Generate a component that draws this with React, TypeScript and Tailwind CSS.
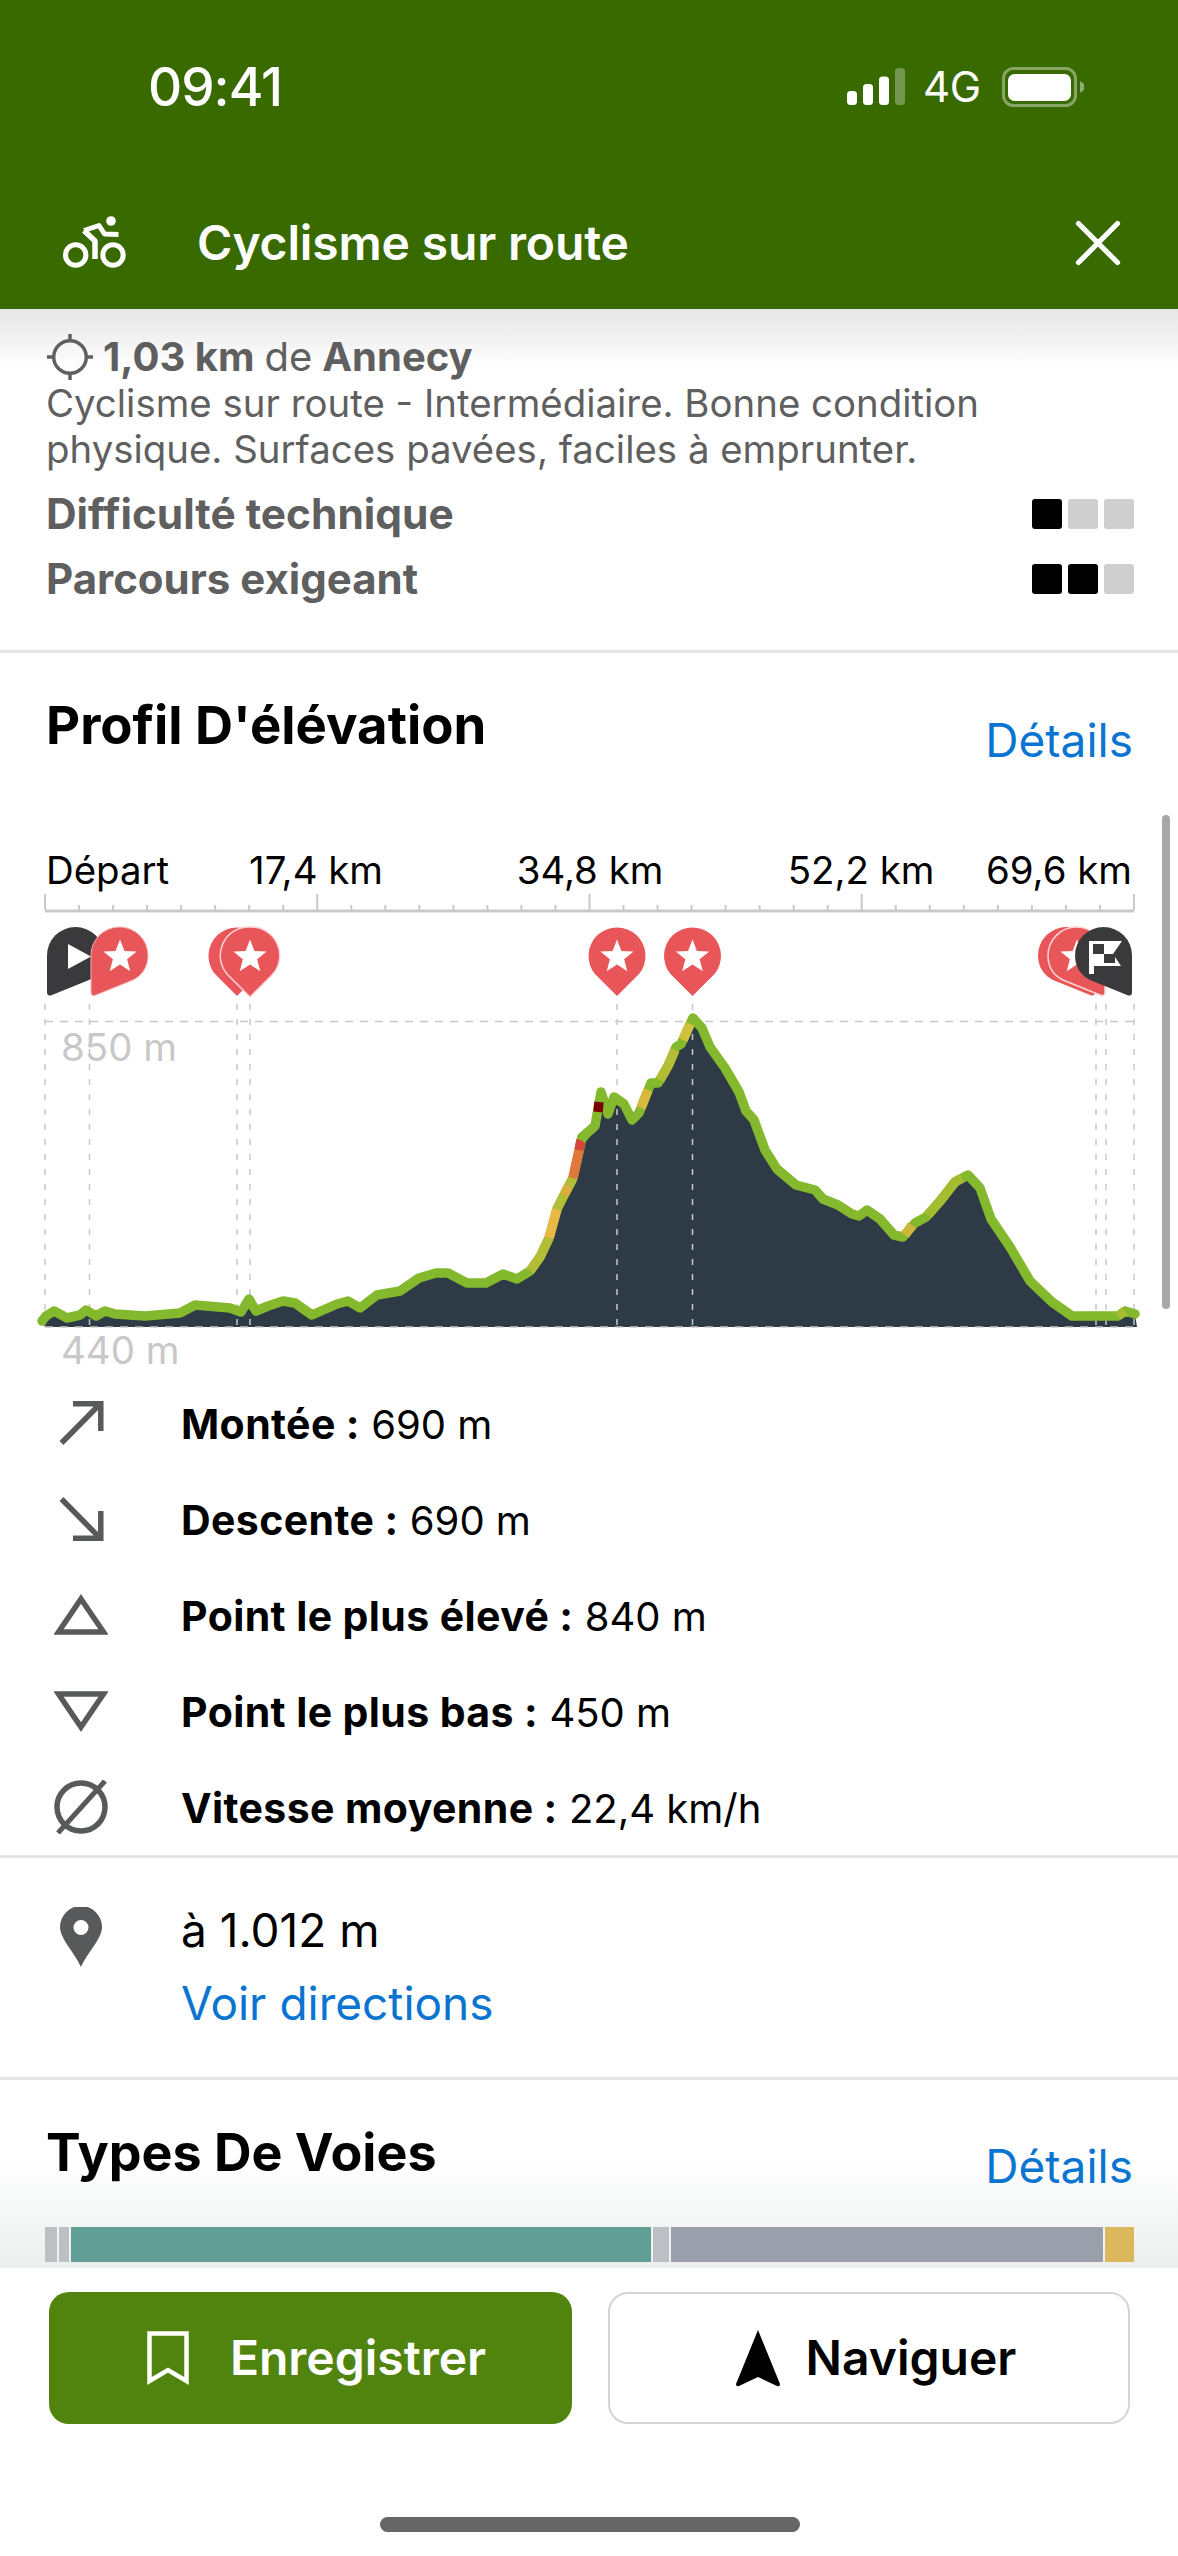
import React from 'react';
import { X } from 'lucide-react';

const font = 'font-["Inter","Liberation_Sans",sans-serif]';

// elevation curve, in page pixels
const curve: [number, number][] = [
  [42, 1321], [46, 1316], [54, 1311], [67, 1318], [80, 1315], [86, 1310], [96, 1316], [105, 1311], [115, 1314],
  [145, 1316], [180, 1313], [195, 1305], [230, 1308], [241, 1312], [249, 1299], [256, 1311], [268, 1306], [283, 1301],
  [295, 1303], [312, 1315], [337, 1304], [348, 1301], [360, 1308], [377, 1295], [400, 1291], [419, 1278], [436, 1273],
  [448, 1273], [467, 1283], [486, 1283], [503, 1274], [517, 1279], [530, 1271], [540, 1257], [549, 1238], [557, 1209],
  [564, 1195], [573, 1178], [580, 1147], [582, 1137], [587, 1133], [595, 1126], [601, 1092], [608, 1114], [614, 1097],
  [624, 1104], [632, 1120], [639, 1113], [651, 1083], [658, 1083], [668, 1066], [676, 1047], [681, 1044], [693, 1018],
  [702, 1028], [710, 1047], [725, 1068], [739, 1092], [746, 1111], [754, 1120], [765, 1150], [777, 1169], [796, 1185],
  [815, 1190], [823, 1199], [838, 1205], [852, 1214], [859, 1216], [867, 1210], [880, 1219], [894, 1235], [903, 1237],
  [915, 1223], [926, 1217], [941, 1200], [955, 1182], [968, 1175], [980, 1188], [991, 1219], [1010, 1247], [1030, 1281],
  [1052, 1302], [1072, 1316], [1095, 1316], [1118, 1316], [1125, 1311], [1135, 1314],
];

const grade: { color: string; pts: [number, number][] }[] = [
  { color: '#b4bd36', pts: [[530, 1271], [540, 1257], [549, 1238]] },
  { color: '#e8b944', pts: [[549, 1238], [557, 1209]] },
  { color: '#b4bd36', pts: [[557, 1209], [564, 1195]] },
  { color: '#dcae3e', pts: [[564, 1195], [569, 1186]] },
  { color: '#b4bd36', pts: [[569, 1186], [573, 1178]] },
  { color: '#e0783c', pts: [[573, 1178], [579, 1150]] },
  { color: '#d8453c', pts: [[579, 1150], [581, 1140]] },
  { color: '#84b82d', pts: [[581, 1140], [587, 1133], [595, 1126]] },
  { color: '#7a0000', pts: [[598, 1112], [599, 1102]] },
  { color: '#d8b93c', pts: [[641, 1108], [648, 1090]] },
  { color: '#b4bd36', pts: [[660, 1080], [668, 1066], [675, 1050]] },
  { color: '#cfc13c', pts: [[683, 1040], [690, 1024]] },
  { color: '#cfb63c', pts: [[905, 1235], [912, 1225]] },
  { color: '#a4bc30', pts: [[928, 1215], [941, 1200], [955, 1182], [962, 1178]] },
  { color: '#a4bc30', pts: [[1118, 1316], [1125, 1311]] },
];

const toPts = (pts: [number, number][]) => pts.map(p => p.join(',')).join(' ');

const ticks = Array.from({ length: 33 }, (_, i) => 45 + i * 34.03);
const markers = [45, 89.5, 237, 250, 617, 692.5, 1096, 1106, 1134];

const Star = ({ cx, cy }: { cx: number; cy: number }) => {
  const pts = Array.from({ length: 10 }, (_, i) => {
    const r = i % 2 === 0 ? 17.5 : 7.5;
    const a = (Math.PI / 5) * i - Math.PI / 2;
    return `${cx + r * Math.cos(a)},${cy + r * Math.sin(a)}`;
  }).join(' ');
  return <polygon points={pts} fill="#fff" />;
};

const RoundPin = ({ cx }: { cx: number }) => (
  <path d={`M${cx} 996 L${cx - 22} 974 A28.5 28.5 0 1 1 ${cx + 22} 974 Z`} fill="#e8565a" />
);

// pin whose point sits at the bottom left corner
const leftPin = (x: number) =>
  `M${x} 955.5 A28.5 28.5 0 0 1 ${x + 57} 955.5 C${x + 57} 968 ${x + 50} 976 ${x + 42} 980 L${x + 5} 995 Q${x} 997 ${x} 992 Z`;
// same pin, point at the bottom right corner
const rightPin = (x: number) =>
  `M${x + 57} 955.5 A28.5 28.5 0 0 0 ${x} 955.5 C${x} 968 ${x + 7} 976 ${x + 15} 980 L${x + 52} 995 Q${x + 57} 997 ${x + 57} 992 Z`;

const ElevationChart = () => (
  <svg viewBox="0 760 1178 615" className="block w-[1178px] h-[615px]">
    {/* axis */}
    <rect x="45" y="909.5" width="1089" height="3" fill="#c9c9c9" />
    {ticks.map((x, i) => (
      <rect key={i} x={x - 1} y={i % 8 === 0 ? 894 : 905} width="2" height={i % 8 === 0 ? 16 : 5} fill="#c9c9c9" />
    ))}

    {/* area */}
    <polygon points={`45,1327 ${toPts(curve)} 1137,1327`} fill="#2e3a46" />

    {/* grid */}
    <line x1="45" x2="1134" y1="1021.5" y2="1021.5" stroke="#c8c8c8" strokeWidth="1.5" strokeDasharray="8 7" />
    <line x1="45" x2="1134" y1="1327" y2="1327" stroke="#c8c8c8" strokeWidth="1.5" strokeDasharray="8 7" />
    {markers.map(x => (
      <line key={x} x1={x} x2={x} y1="1004" y2="1327" stroke="#c8c8c8" strokeWidth="1.5" strokeDasharray="6 9" />
    ))}

    {/* curve */}
    <polyline points={toPts(curve)} fill="none" stroke="#84b82d" strokeWidth="9.5" strokeLinejoin="round" strokeLinecap="round" />
    {grade.map((g, i) => (
      <polyline key={i} points={toPts(g.pts)} fill="none" stroke={g.color} strokeWidth="9.5" strokeLinejoin="round" />
    ))}

    {/* start */}
    <path d={leftPin(47)} fill="#3a3a3c" />
    <polygon points="68,944 91,956.5 68,969" fill="#fff" />
    <path d={leftPin(91)} fill="#e8565a" stroke="#f3b3b3" strokeWidth="1" />
    <Star cx={120} cy={957} />

    {/* waypoints */}
    <RoundPin cx={237} />
    <path d="M250 997 L228 975 A28.5 28.5 0 0 1 250 927 A28.5 28.5 0 0 1 272 975 Z" fill="#e8565a" stroke="#fbd5d5" strokeWidth="1.5" />
    <Star cx={250} cy={957} />
    <RoundPin cx={617} />
    <Star cx={617} cy={957} />
    <RoundPin cx={692.5} />
    <Star cx={692.5} cy={957} />

    {/* finish */}
    <path d={rightPin(1038)} fill="#e8565a" />
    <path d={rightPin(1048)} fill="#e8565a" stroke="#fbd5d5" strokeWidth="1.5" />
    <Star cx={1077} cy={957} />
    <path d={rightPin(1075)} fill="#3a3a3c" />
    <path d="M1089 941 H1122 L1113 954 L1121 966 H1094 V974 H1089 Z" fill="#fff" />
    <rect x="1093" y="944" width="11" height="10" fill="#3a3a3c" />
    <rect x="1104" y="954" width="11" height="9" fill="#3a3a3c" />
  </svg>
);

const AxisLabel = ({ className, children }: { className: string; children: React.ReactNode }) => (
  <span className={`absolute top-[87px] text-[38.4px] leading-[46px] text-black whitespace-nowrap ${className}`}>{children}</span>
);

const statIcons = [
  <svg key="up" viewBox="0 0 54 44" className="w-[54px] h-[44px]"><path d="M7.5 42 L46 3 M19 2.8 H46.8 V30" fill="none" stroke="#58595b" strokeWidth="5.5" /></svg>,
  <svg key="down" viewBox="0 0 54 44" className="w-[54px] h-[44px]"><path d="M7.5 2 L46 41 M19 41.2 H46.8 V14" fill="none" stroke="#58595b" strokeWidth="5.5" /></svg>,
  <svg key="high" viewBox="0 0 54 44" className="w-[54px] h-[44px]"><path d="M27 6 L49.5 39 H4.5 Z" fill="none" stroke="#58595b" strokeWidth="5.5" /></svg>,
  <svg key="low" viewBox="0 0 54 44" className="w-[54px] h-[44px]"><path d="M27 38 L49.5 5 H4.5 Z" fill="none" stroke="#58595b" strokeWidth="5.5" /></svg>,
  <svg key="avg" viewBox="0 0 54 54" className="w-[54px] h-[54px]"><circle cx="27" cy="27" r="24" fill="none" stroke="#58595b" strokeWidth="5.5" /><path d="M4 53 L51 1" stroke="#58595b" strokeWidth="5" /></svg>,
];

const stats = [
  { label: 'Montée :', value: '690 m' },
  { label: 'Descente :', value: '690 m' },
  { label: 'Point le plus élevé :', value: '840 m' },
  { label: 'Point le plus bas :', value: '450 m' },
  { label: 'Vitesse moyenne :', value: '22,4 km/h' },
];

const Rating = ({ filled }: { filled: number }) => (
  <div className="flex gap-[6px]">
    {[0, 1, 2].map(i => (
      <div key={i} className={`w-[30px] h-[30px] rounded-[3px] ${i < filled ? 'bg-black' : 'bg-[#cfcfcf]'}`} />
    ))}
  </div>
);

export default function App() {
  return (
    <div className={`${font} w-[1178px] h-[2556px] flex flex-col bg-white overflow-hidden`}>
      {/* Header */}
      <div className="h-[309px] shrink-0 bg-[#386a00] text-white flex flex-col">
        <div className="h-[176px] pt-[62px] pl-[148px] pr-[94px] flex items-start justify-between">
          <span className="text-[53px] leading-[50px] font-medium tracking-[-1px]">09:41</span>
          <div className="flex items-center h-[50px]">
            <svg viewBox="0 0 60 38" className="w-[60px] h-[38px]">
              <rect x="1" y="23" width="10" height="14" rx="3.5" fill="#fff" />
              <rect x="17" y="16" width="10" height="21" rx="3.5" fill="#fff" />
              <rect x="33" y="8.5" width="10" height="28.5" rx="3.5" fill="#fff" />
              <rect x="49" y="0" width="10" height="37" rx="3.5" fill="#fff" fillOpacity="0.3" />
            </svg>
            <span className="ml-[17px] w-[59px] text-[42px] leading-[50px] font-normal tracking-[-0.5px]">4G</span>
            <svg viewBox="0 0 82 40" className="ml-[20px] w-[82px] h-[40px]">
              <rect x="1.5" y="1.5" width="72" height="37" rx="10" fill="none" stroke="#fff" strokeOpacity="0.4" strokeWidth="3" />
              <rect x="6" y="7" width="63" height="27" rx="6.5" fill="#fff" />
              <path d="M78 14 L82 17 V23 L78 26 Z" fill="#fff" fillOpacity="0.45" />
            </svg>
          </div>
        </div>
        <div className="h-[133px] flex items-center relative">
          <svg viewBox="40 200 110 90" className="ml-[40px] w-[110px] h-[90px] mt-[2px]">
            <circle cx="111" cy="222" r="4.8" fill="#fff" />
            <circle cx="75.7" cy="256" r="10.2" fill="none" stroke="#fff" strokeWidth="5" />
            <circle cx="113" cy="256" r="10.2" fill="none" stroke="#fff" strokeWidth="5" />
            <path d="M84 231.5 L99 226.5 L104.5 235 L118.5 235.5" fill="none" stroke="#fff" strokeWidth="5" strokeLinejoin="round" />
            <path d="M84 231.5 L95 242 V260" fill="none" stroke="#fff" strokeWidth="5.5" strokeLinejoin="round" />
          </svg>
          <span className="ml-[47px] text-[48px] leading-[60px] font-semibold tracking-[-0.15px]">Cyclisme sur route</span>
          <X size={78} strokeWidth={1.6} className="ml-auto mr-[41px]" />
        </div>
      </div>

      {/* Scrolling content */}
      <div className="relative flex-1 min-h-0 overflow-hidden">
        <div className="absolute inset-x-0 top-0 h-[60px] bg-gradient-to-b from-[#e6e6e6] to-white" />

        <div className="relative h-[344px] border-b-[3px] border-[#e4e4e4] pl-[46px] pr-[44px] pt-[25px] text-[#5f5f5f]">
          <div className="flex items-center h-[46px] text-[40px] leading-[46px]">
            <svg viewBox="0 0 48 48" className="w-[46px] h-[46px] ml-[1px] mr-[10px]">
              <circle cx="24" cy="24" r="17" fill="none" stroke="#5f5f5f" strokeWidth="3.6" />
              <path d="M24 0 V8 M24 40 V48 M0 24 H8 M40 24 H48" stroke="#5f5f5f" strokeWidth="3.6" />
            </svg>
            <b className="font-bold">1,03 km</b>
            <span className="ml-[10px]">de</span>
            <b className="ml-[10px] font-bold">Annecy</b>
          </div>
          <p className="text-[38.4px] leading-[46px] whitespace-nowrap">
            Cyclisme sur route - Intermédiaire. Bonne condition
            <br />
            physique. Surfaces pavées, faciles à emprunter.
          </p>
          <div className="mt-[9px] h-[65px] flex items-center justify-between">
            <span className="text-[42.4px] font-bold">Difficulté technique</span>
            <Rating filled={1} />
          </div>
          <div className="h-[65px] flex items-center justify-between">
            <span className="text-[42px] font-bold">Parcours exigeant</span>
            <Rating filled={2} />
          </div>
        </div>

        {/* Elevation */}
        <div className="h-[107px] pl-[46px] pr-[45px] pt-[37px] flex items-start justify-between">
          <h2 className="text-[52.7px] leading-[70px] font-bold text-black">Profil D'élévation</h2>
          <a className="mt-[15px] text-[46px] leading-[70px] text-[#0a75d1]">Détails</a>
        </div>
        <div className="relative">
          <ElevationChart />
          <AxisLabel className="left-[46px]">Départ</AxisLabel>
          <AxisLabel className="left-[316px] -translate-x-1/2">17,4 km</AxisLabel>
          <AxisLabel className="left-[590px] -translate-x-1/2">34,8 km</AxisLabel>
          <AxisLabel className="left-[861px] -translate-x-1/2">52,2 km</AxisLabel>
          <AxisLabel className="right-[46px]">69,6 km</AxisLabel>
          <span className="absolute left-[61px] top-[264px] text-[38.5px] leading-[46px] text-[#c8c8c8]">850 m</span>
          <span className="absolute left-[61px] top-[567px] text-[38.5px] leading-[46px] text-[#c8c8c8]">440 m</span>
        </div>

        <div className="border-b-[3px] border-[#e4e4e4]">
          {stats.map((s, i) => (
            <div key={s.label} className="h-[96px] flex items-center">
              <div className="ml-[54px] w-[54px] flex justify-center">{statIcons[i]}</div>
              <div className="ml-[73px] mt-[4px] text-[40px] text-black whitespace-nowrap">
                <b className="font-bold text-[41px] tracking-[0.4px]">{s.label}</b> {s.value}
              </div>
            </div>
          ))}
        </div>

        <div className="h-[222px] box-border border-b-[3px] border-[#e4e4e4] pt-[36px] flex items-start">
          <svg viewBox="0 0 42 60" className="ml-[60px] mt-[13px] w-[42px] h-[60px]">
            <path
              d="M21 60 C15 46 0 32 0 20 A21 21 0 0 1 42 20 C42 32 27 46 21 60 Z M21 13 A7.5 7.5 0 1 0 21 28 A7.5 7.5 0 1 0 21 13 Z"
              fill="#58595b"
              fillRule="evenodd"
            />
          </svg>
          <div className="ml-[79px] text-[46px] leading-[73px]">
            <div className="text-black">à 1.012 m</div>
            <a className="block text-[#0a75d1]">Voir directions</a>
          </div>
        </div>

        <div className="absolute inset-x-0 bottom-0 h-[110px] bg-gradient-to-b from-transparent to-[#dfe4e2]/60 pointer-events-none" />

        {/* Road types */}
        <div className="relative pl-[46px] pr-[45px] pt-[38px] h-[147px] flex items-start justify-between">
          <h2 className="text-[52px] leading-[70px] font-bold text-black">Types De Voies</h2>
          <a className="mt-[13px] text-[46px] leading-[70px] text-[#0a75d1]">Détails</a>
        </div>
        <div className="relative ml-[45px] w-[1089px] h-[35px] flex gap-[2px]">
          <div className="w-[12px] bg-[#bcc0c5]" />
          <div className="w-[10px] bg-[#bcc0c5]" />
          <div className="w-[580px] bg-[#619f96]" />
          <div className="w-[16px] bg-[#bcc0c5]" />
          <div className="w-[432px] bg-[#9a9fab]" />
          <div className="flex-1 bg-[#dcb75c]" />
        </div>

        <div className="absolute left-[1162px] top-[506px] w-[8px] h-[494px] rounded-full bg-[#a8a8a8]" />
      </div>

      {/* Actions */}
      <div className="h-[288px] shrink-0 bg-white pt-[24px]">
        <div className="pl-[49px] pr-[48px] flex gap-[36px]">
          <button className="w-[523px] h-[132px] pl-[12px] rounded-[20px] bg-[#50840f] text-white flex items-center justify-center">
            <svg viewBox="0 0 42 54" className="w-[42px] h-[54px]">
              <path d="M2.5 2.5 H39.5 V50 L21 39 L2.5 50 Z" fill="none" stroke="#fff" strokeWidth="4.5" />
            </svg>
            <span className="ml-[41px] text-[48px] font-semibold">Enregistrer</span>
          </button>
          <button className="w-[522px] h-[132px] pl-[14px] rounded-[20px] border-2 border-[#d4d4d4] bg-white text-black flex items-center justify-center">
            <svg viewBox="0 0 44 57" className="w-[44px] h-[57px]">
              <path d="M22 0 L44 54 Q44 57 41 56 L22 47 L3 56 Q0 57 0 54 Z" fill="#000" />
            </svg>
            <span className="ml-[26px] text-[48px] font-semibold">Naviguer</span>
          </button>
        </div>
        <div className="mt-[93px] ml-[380px] w-[420px] h-[15px] rounded-full bg-[#666666]" />
      </div>
    </div>
  );
}
